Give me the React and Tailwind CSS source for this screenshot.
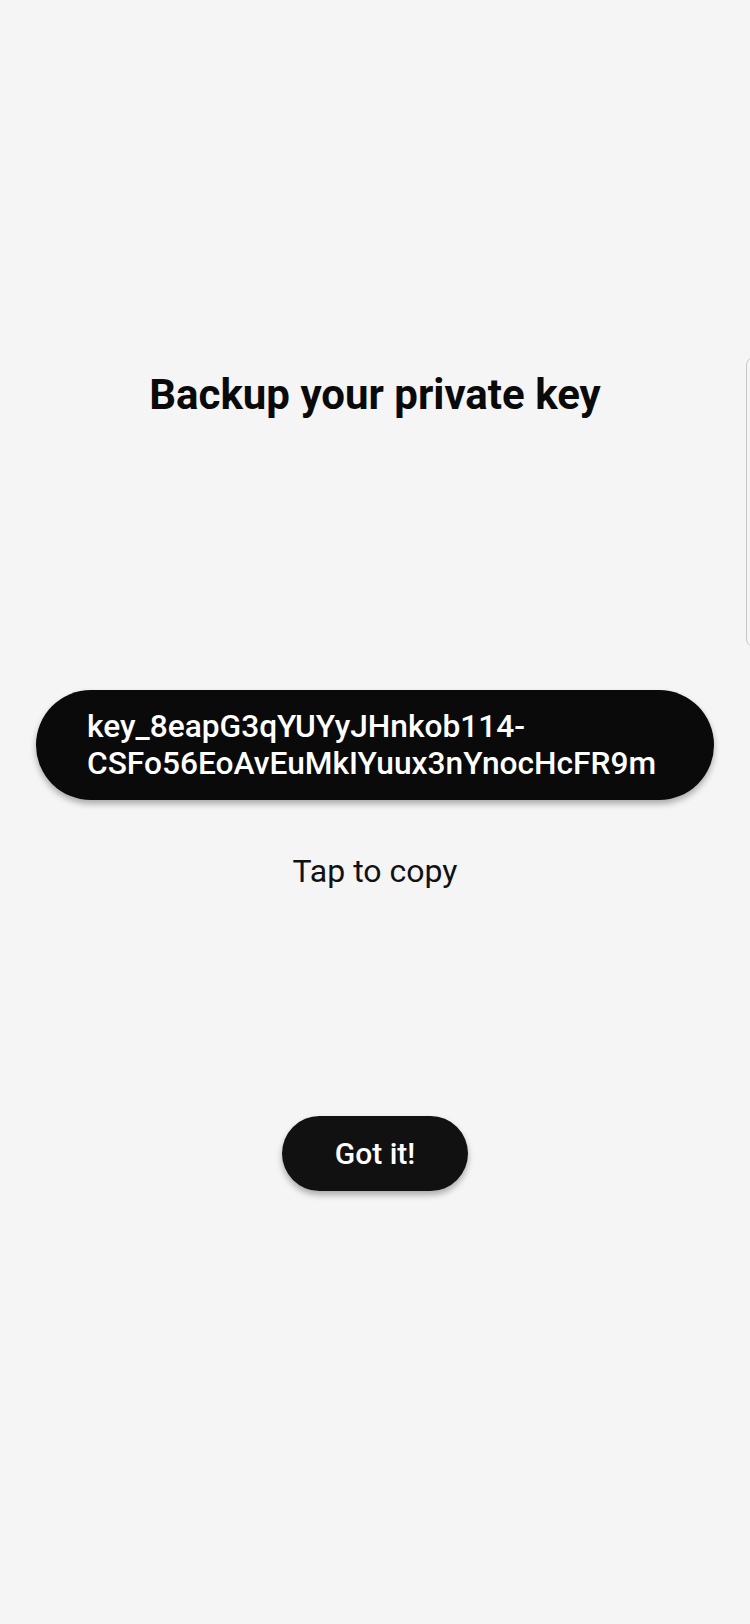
import React from 'react'

export default function App() {
  const privateKey = 'key_8eapG3qYUYyJHnkob114-CSFo56EoAvEuMkIYuux3nYnocHcFR9m'

  return (
    <div className="relative flex h-[1624px] w-[750px] flex-col items-center overflow-hidden bg-[#f5f5f5] font-['Roboto',sans-serif]">
      {/* heading */}
      <h1 className="mt-[370px] text-[42px] leading-[50px] font-bold text-[#0a0a0a]">Backup your private key</h1>

      {/* key pill */}
      <button className="mt-[270px] flex h-[110px] w-[678px] items-center rounded-full bg-[#0a0a0a] pr-[30px] pl-[51px] text-left shadow-[0_4px_6px_rgba(0,0,0,0.3)]">
        <span className="text-[31.7px] leading-[37px] font-medium text-white">{privateKey}</span>
      </button>

      <p className="mt-[53px] text-[32px] leading-[36px] text-[#111]">Tap to copy</p>

      {/* confirm */}
      <button className="mt-[227px] flex h-[75px] w-[186px] items-center justify-center rounded-full bg-[#111] text-[30px] font-medium text-white shadow-[0_4px_6px_rgba(0,0,0,0.3)]">
        Got it!
      </button>

      {/* edge panel handle */}
      <div className="absolute top-[357px] right-[-6px] h-[290px] w-[10px] rounded-l-[8px] border-[1.5px] border-[#c8c8c8] bg-[#f5f5f5]" />
    </div>
  )
}
